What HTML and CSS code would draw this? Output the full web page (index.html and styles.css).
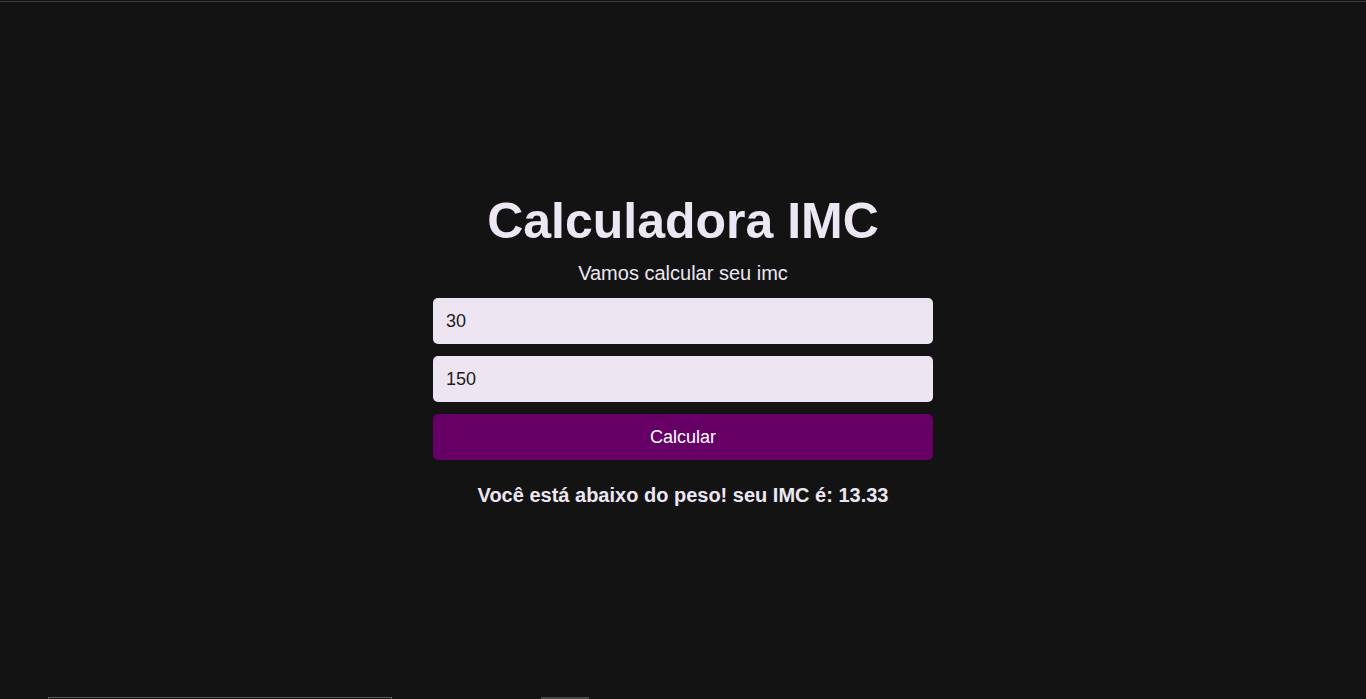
FILE: index.html
```html
<!DOCTYPE html>
<html lang="pt-BR">
<head>
<meta charset="utf-8">
<title>Calculadora IMC</title>
<link rel="stylesheet" href="styles.css">
</head>
<body>
<div class="top-line"></div>
<main class="app">
  <h1 class="title">Calculadora IMC</h1>
  <p class="subtitle">Vamos calcular seu imc</p>
  <form class="form">
    <input class="field" type="text" value="30">
    <input class="field" type="text" value="150">
    <button class="btn" type="button">Calcular</button>
  </form>
  <p class="result">Você está abaixo do peso! seu IMC é: 13.33</p>
</main>
<div class="bottom-bits">
  <span class="bit-outline"></span>
  <span class="bit-fill"></span>
</div>
</body>
</html>
```

FILE: styles.css
```css
* { box-sizing: border-box; }
html, body { height: 100%; }
body {
  margin: 0;
  background: #131313;
  font-family: "Liberation Sans", Arial, sans-serif;
  color: #ede6f3;
  display: flex;
  align-items: center;
  justify-content: center;
  overflow: hidden;
}
.top-line {
  position: fixed;
  top: 1px;
  left: 0;
  right: 0;
  height: 1px;
  background: #3a3a3a;
}
.app {
  width: 500px;
  display: flex;
  flex-direction: column;
  align-items: stretch;
  text-align: center;
}
.title {
  margin: 0 0 13px;
  font-size: 50px;
  font-weight: 700;
  line-height: 56px;
  color: #ede6f3;
}
.subtitle {
  margin: 0 0 13px;
  font-size: 20px;
  line-height: 23px;
}
.form {
  display: flex;
  flex-direction: column;
  gap: 12px;
}
.field {
  height: 46px;
  border: none;
  border-radius: 5px;
  background: #ede5f2;
  padding: 0 13px;
  font-family: "Liberation Sans", Arial, sans-serif;
  font-size: 18px;
  color: #1e1a1a;
  outline: none;
}
.btn {
  height: 46px;
  border: none;
  border-radius: 5px;
  background: #660066;
  color: #ffffff;
  font-family: "Liberation Sans", Arial, sans-serif;
  font-size: 18px;
  cursor: pointer;
}
.result {
  margin: 24px 0 0;
  font-size: 20px;
  font-weight: 700;
  line-height: 22px;
}
.bottom-bits {
  position: fixed;
  left: 0;
  right: 0;
  bottom: 0;
  height: 2px;
}
.bit-outline {
  position: absolute;
  left: 48px;
  width: 344px;
  top: 0;
  height: 2px;
  border-top: 1px solid #5a5a5a;
  border-left: 1px solid #5a5a5a;
  border-right: 1px solid #5a5a5a;
}
.bit-fill {
  position: absolute;
  left: 541px;
  width: 48px;
  top: 0;
  height: 2px;
  background: #454545;
}
```
